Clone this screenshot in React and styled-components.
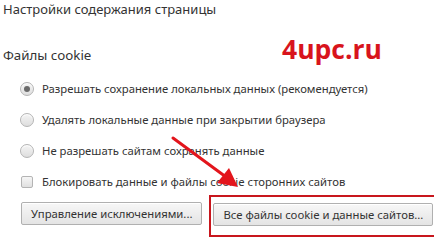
import React from 'react'
import styled, { createGlobalStyle } from 'styled-components'

const GlobalStyle = createGlobalStyle`
  html, body {
    margin: 0;
    padding: 0;
    background: #fff;
  }
  body {
    font-family: "Noto Sans", "Open Sans", sans-serif;
    color: #333;
  }
`

const Page = styled.div`
  position: relative;
  width: 434px;
  height: 241px;
  overflow: hidden;
  padding: 0 3px;
  box-sizing: border-box;
`
const Title = styled.div`
  font-size: 13px;
  line-height: 18px;
  height: 18px;
  color: #333;
`
const Section = styled.div`
  margin-top: 28px;
  font-size: 13.3px;
  line-height: 18px;
  color: #333;
`
const Options = styled.div`
  margin-top: 9px;
  padding-left: 17px;
  display: flex;
  flex-direction: column;
`
const Option = styled.label`
  display: flex;
  align-items: center;
  gap: 8px;
  height: 31px;
  font-size: 11.3px;
  color: #333;
`
const Radio = styled.span`
  position: relative;
  width: 14px;
  height: 14px;
  border-radius: 50%;
  box-sizing: border-box;
  border: 1px solid #b4b4b4;
  background: linear-gradient(#f4f4f4, #dedede);
  box-shadow: inset 0 1px 1px #fff;
  flex: none;
  &::after {
    content: '';
    display: ${props => (props.checked ? 'block' : 'none')};
    position: absolute;
    left: 3px;
    top: 3px;
    width: 6px;
    height: 6px;
    border-radius: 50%;
    background: #6a6a6a;
  }
`
const Check = styled.span`
  width: 12px;
  height: 12px;
  margin: 0 1px;
  border-radius: 2px;
  box-sizing: border-box;
  border: 1px solid #b4b4b4;
  background: linear-gradient(#f6f6f6, #e0e0e0);
  flex: none;
`
const Buttons = styled.div`
  margin-top: 5px;
  padding-left: 18px;
  display: flex;
  gap: 11px;
`
const Button = styled.button`
  height: 23px;
  padding: 0 9px;
  font-family: inherit;
  font-size: 11.3px;
  color: #333;
  border: 1px solid #b0b0b0;
  border-radius: 2px;
  background: linear-gradient(#f7f7f7, #e4e4e4);
  box-shadow: inset 0 1px 0 #fff;
  white-space: nowrap;
`
const Marked = styled.div`
  position: relative;
`
const RedBox = styled.div`
  position: absolute;
  left: -4px;
  right: -5px;
  top: -7px;
  bottom: -11px;
  border: 2px solid #c8161d;
  pointer-events: none;
`
const Logo = styled.div`
  position: absolute;
  left: 282px;
  top: 31px;
  font-family: "Open Sans", sans-serif;
  font-weight: 700;
  font-size: 26.5px;
  color: #d8141c;
`
const Arrow = styled.svg`
  position: absolute;
  left: 0;
  top: 0;
  pointer-events: none;
`

const options = [
  { type: 'radio', checked: true, label: 'Разрешать сохранение локальных данных (рекомендуется)' },
  { type: 'radio', label: 'Удалять локальные данные при закрытии браузера' },
  { type: 'radio', label: 'Не разрешать сайтам сохранять данные' },
  { type: 'check', label: 'Блокировать данные и файлы cookie сторонних сайтов' },
]

export default function App() {
  return (
    <>
      <GlobalStyle />
      <Page>
        <Title>Настройки содержания страницы</Title>
        <Section>Файлы cookie</Section>
        <Options>
          {options.map(o => (
            <Option key={o.label}>
              {o.type === 'radio' ? <Radio checked={o.checked} /> : <Check />}
              {o.label}
            </Option>
          ))}
        </Options>
        <Buttons>
          <Button>Управление исключениями...</Button>
          <Marked>
            <Button>Все файлы cookie и данные сайтов...</Button>
            <RedBox />
          </Marked>
        </Buttons>
        <Logo>4upc.ru</Logo>
        <Arrow width="434" height="241" viewBox="0 0 434 241">
          <line x1="173" y1="138" x2="226" y2="177" stroke="#e3151c" strokeWidth="3" strokeLinecap="round" />
          <polygon points="238,187 217,183 229,168" fill="#e3151c" />
        </Arrow>
      </Page>
    </>
  )
}
